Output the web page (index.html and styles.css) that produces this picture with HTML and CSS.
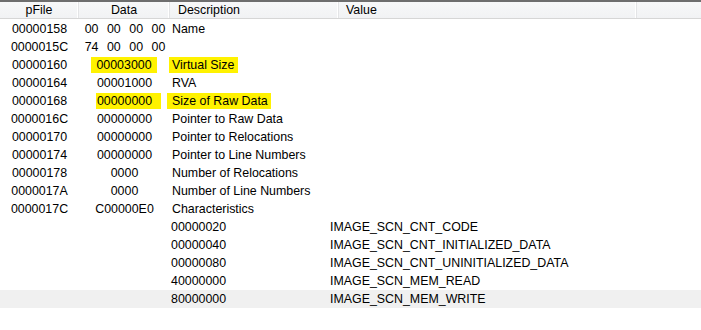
FILE: index.html
```html
<!DOCTYPE html>
<html>
<head>
<meta charset="utf-8">
<link rel="stylesheet" href="styles.css">
</head>
<body>
<div class="list">
  <div class="header">
    <div class="hcell c-center">pFile</div>
    <div class="hcell c-center">Data</div>
    <div class="hcell h-desc">Description</div>
    <div class="hcell h-val">Value</div>
    <div class="hcell h-last"></div>
  </div>
  <div class="rows">
    <div class="row"><div class="cell c-center">00000158</div><div class="cell c-center"><span class="bytes"><span>00</span><span>00</span><span>00</span><span>00</span></span></div><div class="cell desc">Name</div><div class="cell"></div><div class="cell"></div></div>
    <div class="row"><div class="cell c-center">0000015C</div><div class="cell c-center"><span class="bytes"><span>74</span><span>00</span><span>00</span><span>00</span></span></div><div class="cell desc"></div><div class="cell"></div><div class="cell"></div></div>
    <div class="row"><div class="cell c-center">00000160</div><div class="cell c-center"><span class="mark mark-d1">00003000</span></div><div class="cell desc"><span class="mark mark-t1">Virtual Size</span></div><div class="cell"></div><div class="cell"></div></div>
    <div class="row"><div class="cell c-center">00000164</div><div class="cell c-center">00001000</div><div class="cell desc">RVA</div><div class="cell"></div><div class="cell"></div></div>
    <div class="row"><div class="cell c-center">00000168</div><div class="cell c-center"><span class="mark mark-d2">00000000</span></div><div class="cell desc"><span class="mark mark-t2">Size of Raw Data</span></div><div class="cell"></div><div class="cell"></div></div>
    <div class="row"><div class="cell c-center">0000016C</div><div class="cell c-center">00000000</div><div class="cell desc">Pointer to Raw Data</div><div class="cell"></div><div class="cell"></div></div>
    <div class="row"><div class="cell c-center">00000170</div><div class="cell c-center">00000000</div><div class="cell desc">Pointer to Relocations</div><div class="cell"></div><div class="cell"></div></div>
    <div class="row"><div class="cell c-center">00000174</div><div class="cell c-center">00000000</div><div class="cell desc">Pointer to Line Numbers</div><div class="cell"></div><div class="cell"></div></div>
    <div class="row"><div class="cell c-center">00000178</div><div class="cell c-center">0000</div><div class="cell desc">Number of Relocations</div><div class="cell"></div><div class="cell"></div></div>
    <div class="row"><div class="cell c-center">0000017A</div><div class="cell c-center">0000</div><div class="cell desc">Number of Line Numbers</div><div class="cell"></div><div class="cell"></div></div>
    <div class="row"><div class="cell c-center">0000017C</div><div class="cell c-center">C00000E0</div><div class="cell desc">Characteristics</div><div class="cell"></div><div class="cell"></div></div>
    <div class="row"><div class="cell"></div><div class="cell"></div><div class="cell flag"><span class="fhex">00000020</span><span>IMAGE_SCN_CNT_CODE</span></div></div>
    <div class="row"><div class="cell"></div><div class="cell"></div><div class="cell flag"><span class="fhex">00000040</span><span>IMAGE_SCN_CNT_INITIALIZED_DATA</span></div></div>
    <div class="row"><div class="cell"></div><div class="cell"></div><div class="cell flag"><span class="fhex">00000080</span><span>IMAGE_SCN_CNT_UNINITIALIZED_DATA</span></div></div>
    <div class="row"><div class="cell"></div><div class="cell"></div><div class="cell flag"><span class="fhex">40000000</span><span>IMAGE_SCN_MEM_READ</span></div></div>
    <div class="row selected"><div class="cell"></div><div class="cell"></div><div class="cell flag"><span class="fhex">80000000</span><span>IMAGE_SCN_MEM_WRITE</span></div></div>
  </div>
</div>
</body>
</html>
```

FILE: styles.css
```css
html, body {
  margin: 0;
  padding: 0;
  background: #ffffff;
}

body {
  width: 701px;
  height: 330px;
  overflow: hidden;
  font-family: "Liberation Sans", Arial, sans-serif;
  font-size: 12.4px;
  color: #000000;
}

.list {
  display: flex;
  flex-direction: column;
}

.header {
  display: grid;
  grid-template-columns: 79px 91px 169px 298px 1fr;
  height: 16px;
  border-top: 2px solid #6e6e6e;
  border-bottom: 1px solid #d6d6d6;
  background: linear-gradient(#f7f8f9, #f1f2f4);
}

.hcell {
  display: flex;
  align-items: center;
  border-right: 1px solid #e3e4e6;
  box-shadow: inset -1px 0 0 #ffffff;
  line-height: 16px;
  white-space: nowrap;
}

.hcell.c-center {
  justify-content: center;
}

.h-desc {
  padding-left: 8px;
}

.h-val {
  padding-left: 7px;
}

.h-last {
  border-right: none;
  box-shadow: none;
}

.rows {
  display: flex;
  flex-direction: column;
  padding-top: 1px;
}

.row {
  display: grid;
  grid-template-columns: 79px 91px 169px 298px 1fr;
  height: 18px;
  align-items: center;
  white-space: nowrap;
}

.row.selected {
  background: #f0f0f0;
}

.cell {
  line-height: 18px;
  height: 18px;
  display: flex;
  align-items: center;
}

.cell.c-center {
  justify-content: center;
}

.desc {
  padding-left: 2px;
}

.bytes {
  display: flex;
  gap: 8.5px;
  margin-left: 1px;
}

.flag {
  grid-column: 3 / 6;
  padding-left: 1px;
}

.fhex {
  display: inline-block;
  width: 159px;
}

.mark {
  display: inline-block;
  background: #fff200;
  line-height: 16px;
  height: 16px;
}

.mark-d1 {
  padding: 0 5px 0 5px;
  margin-left: -1px;
}

.mark-t1 {
  padding: 0 4px 0 3px;
  margin-left: -3px;
}

.mark-d2 {
  padding: 0 9px 0 1px;
  margin-right: -8px;
}

.mark-t2 {
  padding: 0 3px 0 5px;
  margin-left: -5px;
}
```
